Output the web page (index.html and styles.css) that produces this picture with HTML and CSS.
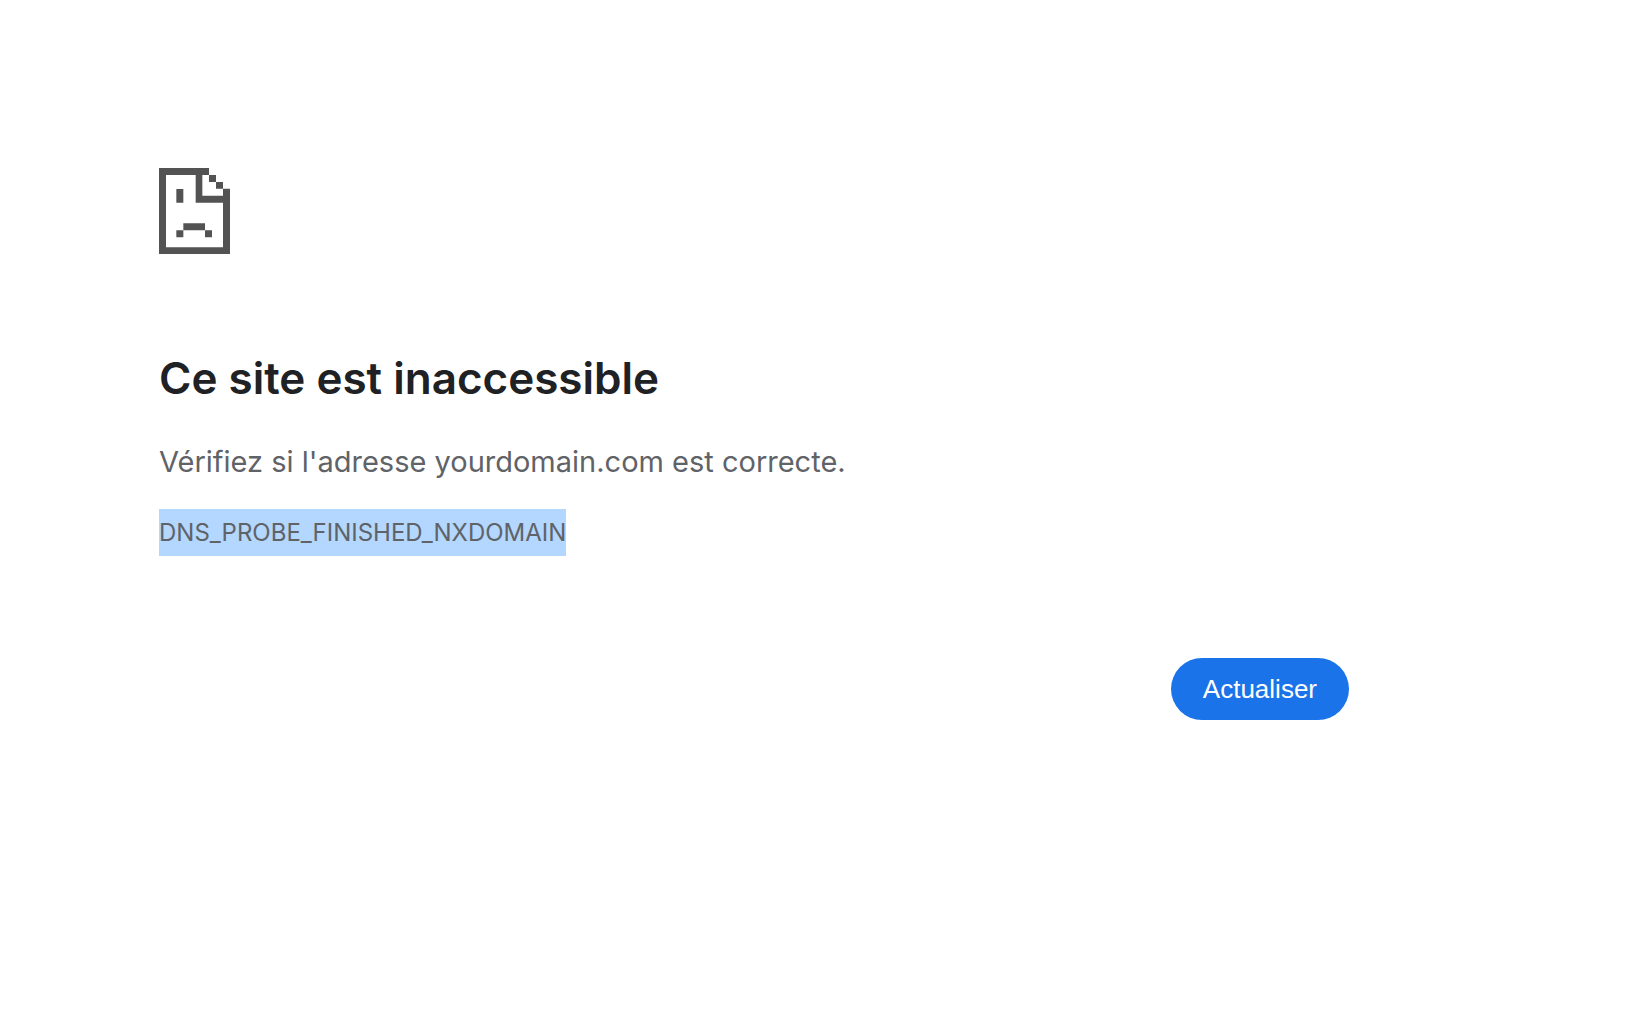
FILE: index.html
```html
<!DOCTYPE html>
<html lang="fr">

<head>
  <meta charset="UTF-8">
  <title>yourdomain.com</title>
  <link rel="stylesheet" href="styles.css">
</head>

<body>
  <main class="error-page">
    <svg class="icon" viewBox="0 0 213 258" aria-hidden="true">
      <path d="M0 0H150V21H130V83H192V62H213V258H0ZM21 21V238H192V104H110V21Z" fill-rule="evenodd" />
      <path d="M150 21H171V42H150ZM171 42H192V62H171ZM52 63H73V104H52ZM73 166H138V187H73ZM52 187H73V208H52ZM138 187H159V208H138Z" />
    </svg>
    <h1>Ce site est inaccessible</h1>
    <p class="summary">Vérifiez si l'adresse yourdomain.com est correcte.</p>
    <div class="error-code"><span class="selected">DNS_PROBE_FINISHED_NXDOMAIN</span></div>
    <div class="buttons">
      <button type="button" onclick="location.reload()">Actualiser</button>
    </div>
  </main>
</body>

</html>
```

FILE: styles.css
```css
body {
  margin: 0;
  background-color: #fff;
  color: #5f6368;
  font-family: Inter, "Liberation Sans", sans-serif;
}

.error-page {
  margin: 0 297px 0 159px;
  padding-top: 168px;
}

.icon {
  display: block;
  width: 71px;
  height: 86px;
  fill: #535353;
}

h1 {
  margin: 95px 0 32px;
  color: #202124;
  font-size: 44px;
  font-weight: 600;
  line-height: 58px;
}

.summary {
  margin: 0;
  font-size: 29px;
  line-height: 46px;
}

.error-code {
  margin-top: 24px;
  font-size: 24px;
  line-height: 47px;
}

.selected {
  display: inline-block;
  background-color: #b3d7ff;
}

.buttons {
  display: flex;
  justify-content: flex-end;
  margin-top: 102px;
}

button {
  padding: 0 32px;
  border: none;
  border-radius: 31px;
  background-color: #1a73e8;
  color: #fff;
  font-family: "Liberation Sans", Arial, sans-serif;
  font-size: 26px;
  line-height: 62px;
  cursor: pointer;
}
```
